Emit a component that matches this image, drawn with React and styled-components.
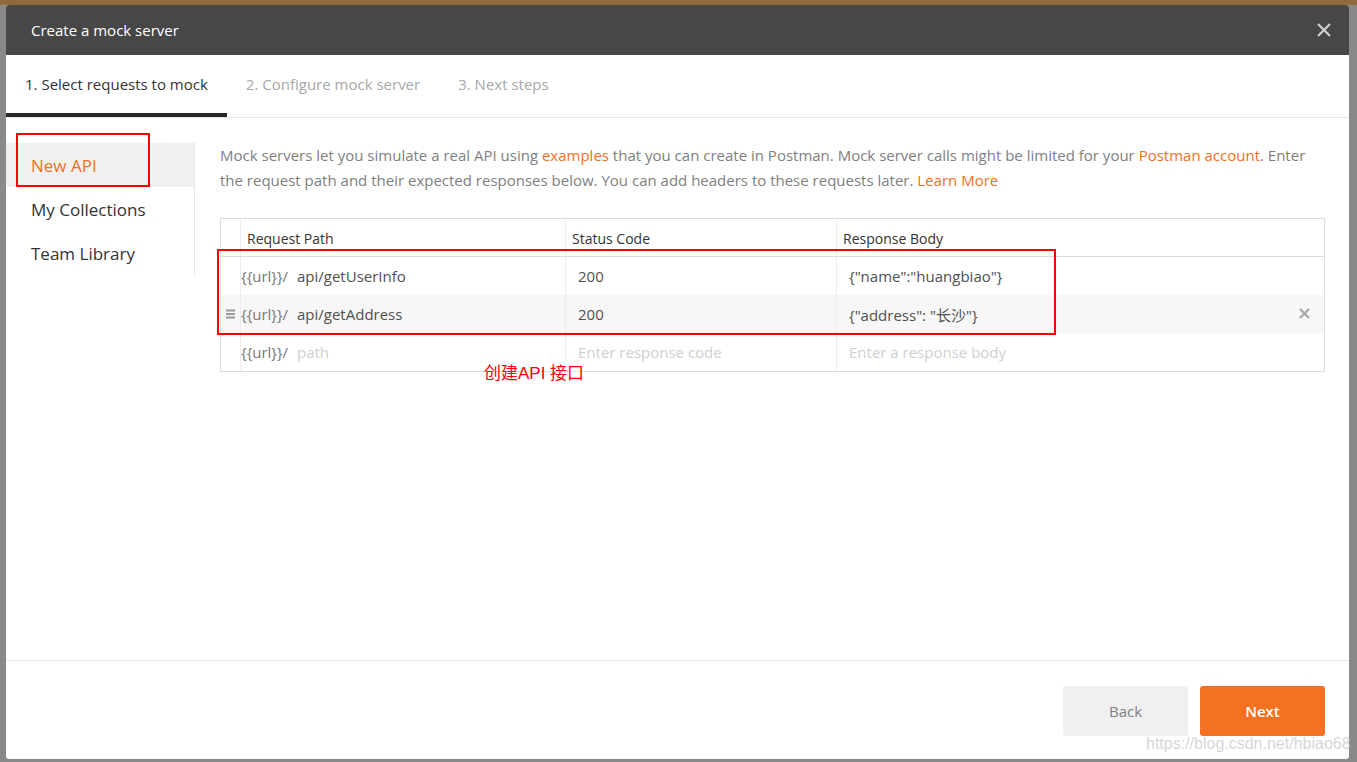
import React from "react";
import styled, { createGlobalStyle } from "styled-components";

const GlobalStyle = createGlobalStyle`
  *, *::before, *::after {
    box-sizing: border-box;
  }
  html, body {
    margin: 0;
    padding: 0;
    background: #898989;
    font-family: "Open Sans", "Noto Sans", "Noto Sans CJK SC", sans-serif;
  }
`;

const rows = [
  { path: "api/getUserInfo", code: "200", body: '{"name":"huangbiao"}' },
  { path: "api/getAddress", code: "200", body: '{"address": "长沙"}', hover: true },
];

const App = () => {
  return (
    <>
      <GlobalStyle />
      <Page>
        <TopStrip />
        <Modal>
          <Header>
            <Title>Create a mock server</Title>
            <Close width="16" height="16" viewBox="0 0 16 16">
              <path d="M2 2 L14 14 M14 2 L2 14" stroke="#cfcfcf" strokeWidth="2.2" />
            </Close>
          </Header>
          <Tabs>
            <Tab active>1. Select requests to mock</Tab>
            <Tab>2. Configure mock server</Tab>
            <Tab>3. Next steps</Tab>
          </Tabs>
          <Body>
            <Sidebar>
              <SideItem active>New API</SideItem>
              <SideItem>My Collections</SideItem>
              <SideItem>Team Library</SideItem>
            </Sidebar>
            <Content>
              <Intro>
                Mock servers let you simulate a real API using <Link>examples</Link> that you can
                create in Postman. Mock server calls might be limited for your{" "}
                <Link>Postman account</Link>. Enter the request path and their expected responses
                below. You can add headers to these requests later. <Link>Learn More</Link>
              </Intro>
              <Table>
                <HeadRow>
                  <Cell />
                  <HeadCell>Request Path</HeadCell>
                  <HeadCell>Status Code</HeadCell>
                  <HeadCell>Response Body</HeadCell>
                </HeadRow>
                {rows.map((r) => (
                  <Row key={r.path} hover={r.hover}>
                    <Cell>
                      {r.hover && (
                        <svg width="9" height="10" viewBox="0 0 9 10">
                          <path d="M0 1.5 H9 M0 5 H9 M0 8.5 H9" stroke="#9a9a9a" strokeWidth="2" />
                        </svg>
                      )}
                    </Cell>
                    <PathCell>
                      <Prefix>{"{{url}}/"}</Prefix>
                      {r.path}
                    </PathCell>
                    <DataCell>{r.code}</DataCell>
                    <DataCell>
                      {r.body}
                      {r.hover && (
                        <Remove width="11" height="11" viewBox="0 0 11 11">
                          <path d="M1 1 L10 10 M10 1 L1 10" stroke="#a8a8a8" strokeWidth="2.4" />
                        </Remove>
                      )}
                    </DataCell>
                  </Row>
                ))}
                <Row>
                  <Cell />
                  <PathCell>
                    <Prefix>{"{{url}}/"}</Prefix>
                    <Placeholder>path</Placeholder>
                  </PathCell>
                  <DataCell>
                    <Placeholder>Enter response code</Placeholder>
                  </DataCell>
                  <DataCell>
                    <Placeholder>Enter a response body</Placeholder>
                  </DataCell>
                </Row>
              </Table>
            </Content>
          </Body>
          <Footer>
            <Button>Back</Button>
            <Button primary>Next</Button>
          </Footer>
          <Mark style={{ left: 10, top: 128, width: 134, height: 54 }} />
          <Mark style={{ left: 211, top: 244, width: 839, height: 86 }} />
          <Note>创建API 接口</Note>
        </Modal>
        <Watermark>https://blog.csdn.net/hbiao68</Watermark>
      </Page>
    </>
  );
};

const Page = styled.div`
  position: relative;
  width: 1357px;
  height: 762px;
  overflow: hidden;
`;

const TopStrip = styled.div`
  height: 5px;
  background: #8e6b37;
`;

const Modal = styled.div`
  position: relative;
  margin-left: 6px;
  width: 1343px;
  height: 754px;
  background: #fff;
  border-radius: 3px;
  display: flex;
  flex-direction: column;
  overflow: hidden;
`;

const Header = styled.div`
  height: 50px;
  flex-shrink: 0;
  background: #474747;
  display: flex;
  align-items: center;
  justify-content: space-between;
  padding: 0 17px 0 25px;
`;

const Title = styled.div`
  color: #fff;
  font-size: 15px;
`;

const Close = styled.svg`
  display: block;
`;

const Tabs = styled.div`
  height: 63px;
  flex-shrink: 0;
  display: flex;
  border-bottom: 1px solid #e4e4e4;
`;

const Tab = styled.div`
  padding: 0 19px;
  display: flex;
  align-items: center;
  font-size: 15px;
  color: ${(p) => (p.active ? "#333" : "#a8a8a8")};
  border-bottom: 4px solid ${(p) => (p.active ? "#282828" : "transparent")};
`;

const Body = styled.div`
  flex: 1;
  display: flex;
  align-items: flex-start;
  padding-top: 25px;
`;

const Sidebar = styled.div`
  width: 189px;
  flex-shrink: 0;
  border-right: 1px solid #e8e8e8;
`;

const SideItem = styled.div`
  height: 44px;
  display: flex;
  align-items: center;
  padding-left: 25px;
  font-size: 17px;
  color: ${(p) => (p.active ? "#f47023" : "#333")};
  background: ${(p) => (p.active ? "#f0f0f0" : "transparent")};
`;

const Content = styled.div`
  flex: 1;
  padding: 0 24px 0 25px;
`;

const Intro = styled.p`
  margin: 0;
  font-size: 15px;
  line-height: 25px;
  color: #808080;
`;

const Link = styled.span`
  color: #f47023;
`;

const Table = styled.div`
  margin-top: 25px;
  border: 1px solid #dcdcdc;
`;

const Row = styled.div`
  display: grid;
  grid-template-columns: 20px 325px 271px 1fr;
  height: 38px;
  background: ${(p) => (p.hover ? "#f7f7f7" : "#fff")};
`;

const HeadRow = styled(Row)`
  height: 38px;
  border-bottom: 1px solid #dcdcdc;
`;

const Cell = styled.div`
  display: flex;
  align-items: center;
  justify-content: center;
  border-right: 1px solid #ececec;
`;

const HeadCell = styled.div`
  display: flex;
  align-items: center;
  padding: 1px 0 0 6px;
  font-size: 14px;
  color: #333;
  border-right: 1px solid #ececec;
  &:last-child {
    border-right: none;
  }
`;

const DataCell = styled.div`
  position: relative;
  display: flex;
  align-items: center;
  padding-left: 12px;
  font-size: 15px;
  color: #505050;
  border-right: 1px solid #ececec;
  &:last-child {
    border-right: none;
  }
`;

const PathCell = styled(DataCell)`
  padding-left: 0;
`;

const Prefix = styled.span`
  color: #777;
  width: 56px;
  flex-shrink: 0;
`;

const Placeholder = styled.span`
  color: #cfcfcf;
`;

const Remove = styled.svg`
  position: absolute;
  right: 14px;
  top: 13px;
`;

const Footer = styled.div`
  height: 99px;
  flex-shrink: 0;
  border-top: 1px solid #e6e6e6;
  display: flex;
  justify-content: flex-end;
  align-items: flex-start;
  gap: 12px;
  padding: 25px 24px 0 0;
`;

const Button = styled.div`
  width: 125px;
  height: 50px;
  border-radius: 3px;
  display: flex;
  align-items: center;
  justify-content: center;
  font-size: 15px;
  background: ${(p) => (p.primary ? "#f47023" : "#f0f0f0")};
  color: ${(p) => (p.primary ? "#fff" : "#808080")};
  ${(p) => p.primary && "font-weight: 600;"}
`;

const Mark = styled.div`
  position: absolute;
  border: 2px solid #ff0000;
  pointer-events: none;
`;

const Note = styled.div`
  position: absolute;
  left: 478px;
  top: 354px;
  font-size: 17px;
  color: #ff0000;
  font-family: "Liberation Sans", "Noto Sans CJK SC", sans-serif;
`;

const Watermark = styled.div`
  position: absolute;
  left: 1146px;
  top: 735px;
  font-family: "Liberation Sans", sans-serif;
  font-size: 16px;
  color: rgba(200, 200, 200, 0.75);
`;

export default App;
